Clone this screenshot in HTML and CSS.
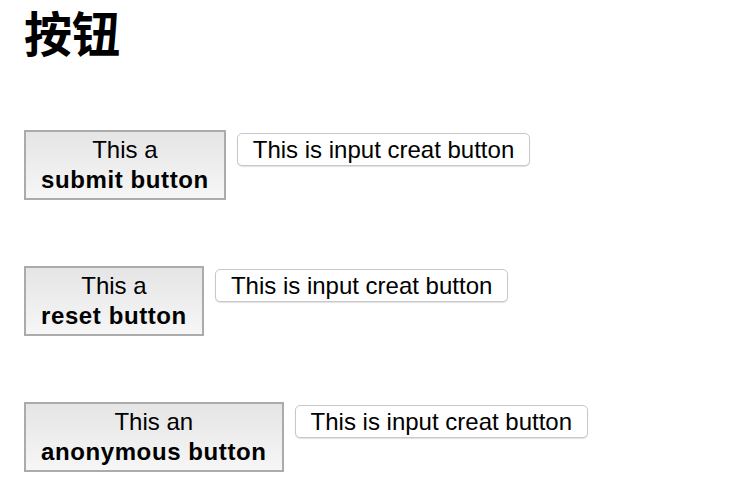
FILE: index.html
```html
<!DOCTYPE html>
<html lang="zh">
<head>
<meta charset="utf-8">
<title>按钮</title>
<link rel="stylesheet" href="styles.css">
</head>
<body>
<h1 class="title">按钮</h1>
<div class="rows">
  <form class="row">
    <button type="submit" class="big-btn">This a<br><b>submit button</b></button>
    <input type="button" class="input-btn" value="This is input creat button">
  </form>
  <form class="row">
    <button type="reset" class="big-btn">This a<br><b>reset button</b></button>
    <input type="button" class="input-btn" value="This is input creat button">
  </form>
  <form class="row">
    <button type="button" class="big-btn">This an<br><b>anonymous button</b></button>
    <input type="button" class="input-btn" value="This is input creat button">
  </form>
</div>
</body>
</html>
```
FILE: styles.css
```css
html, body {
  margin: 0;
  background: #ffffff;
}
body {
  padding: 0 24px;
  font-family: "Liberation Sans", Arial, "Noto Sans CJK SC", sans-serif;
  font-size: 24px;
  color: #000;
}
.title {
  margin: -4px 0 0;
  font-family: "Noto Sans CJK SC", "Liberation Sans", sans-serif;
  font-size: 48px;
  font-weight: 700;
  line-height: 70px;
}
.rows {
  display: flex;
  flex-direction: column;
  gap: 66px;
  margin-top: 64px;
}
.row {
  display: flex;
  align-items: baseline;
  gap: 11px;
  margin: 0;
}
.big-btn {
  font-family: inherit;
  font-size: 24px;
  line-height: 30px;
  color: #000;
  text-align: center;
  padding: 3px 15px;
  border: 2px solid #ababab;
  border-radius: 0;
  background: linear-gradient(#e5e5e5, #f6f6f6);
  margin: 0;
}
.big-btn b {
  font-weight: 700;
  letter-spacing: 0.6px;
}
.input-btn {
  font-family: inherit;
  font-size: 24px;
  line-height: 27px;
  color: #000;
  padding: 2px 15px;
  border: 1px solid #c8c8c8;
  border-radius: 5px;
  background: #ffffff;
  box-shadow: 0 1px 1px rgba(0, 0, 0, 0.12);
  margin: 0;
  -webkit-appearance: none;
  appearance: none;
}
```
